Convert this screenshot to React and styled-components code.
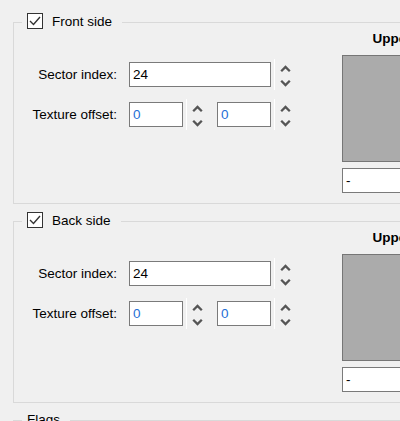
import React from "react";
import styled, { createGlobalStyle } from "styled-components";

const GlobalStyle = createGlobalStyle`
  html, body {
    margin: 0;
    padding: 0;
    overflow: hidden;
    background: #f0f0f0;
  }
`;

const Page = styled.div`
  width: 400px;
  height: 421px;
  overflow: hidden;
  box-sizing: border-box;
  padding: 22px 0 0 13px;
  background: #f0f0f0;
  font-family: "Liberation Sans", Arial, sans-serif;
  font-size: 13.5px;
  color: #000;
`;

const GroupBox = styled.div`
  position: relative;
  box-sizing: border-box;
  width: 520px;
  height: ${(p) => p.height || 182}px;
  margin-bottom: 17px;
  border: 1px solid #d9d9d9;
`;

// legend sits over the top border line, like a WinForms group box caption
const Legend = styled.div`
  position: absolute;
  top: -10px;
  left: 8px;
  height: 19px;
  display: flex;
  align-items: flex-start;
  gap: 9px;
  padding: 0 10px 0 5px;
  background: #f0f0f0;
  line-height: 17px;
  white-space: nowrap;
`;

const CheckBox = styled.div`
  box-sizing: border-box;
  width: 16px;
  height: 16px;
  border: 1px solid #333;
  background: #fff;
  display: flex;
  align-items: center;
  justify-content: center;
`;

const Body = styled.div`
  display: flex;
  padding-top: 7px;
`;

const Fields = styled.div`
  display: grid;
  grid-template-columns: 103px auto;
  column-gap: 12px;
  row-gap: 9px;
  padding-top: 29px;
  align-items: center;
  align-self: flex-start;
`;

const Label = styled.div`
  text-align: right;
  line-height: 17px;
  white-space: nowrap;
`;

const Controls = styled.div`
  display: flex;
  align-items: center;
  height: 31px;
`;

const TextBox = styled.div`
  box-sizing: border-box;
  width: ${(p) => p.width}px;
  height: 25px;
  border: 1px solid #7a7a7a;
  background: #fff;
  padding-left: 3px;
  line-height: 23px;
  color: ${(p) => (p.numeric ? "#1f6fd6" : "#000")};
  margin-right: 3px;
`;

const Spinner = styled.div`
  box-sizing: border-box;
  width: 22px;
  height: 31px;
  border-left: 1px solid #fff;
  display: flex;
  flex-direction: column;
  align-items: center;
  padding-top: 6px;
  gap: 6px;
  margin-right: ${(p) => (p.spaced ? 9 : 0)}px;
`;

const Preview = styled.div`
  margin-left: 46px;
  width: 100px;
  display: flex;
  flex-direction: column;
`;

const PreviewTitle = styled.div`
  font-weight: bold;
  text-align: center;
  line-height: 17px;
  margin-bottom: 8px;
  white-space: nowrap;
`;

const TextureBox = styled.div`
  box-sizing: border-box;
  height: 107px;
  background: #ababab;
  border: 1px solid #767676;
  margin-bottom: 6px;
`;

const NameBox = styled.div`
  box-sizing: border-box;
  height: 25px;
  border: 1px solid #7a7a7a;
  background: #fff;
  padding-left: 3px;
  line-height: 23px;
`;

const Chevron = ({ down }) => (
  <svg width="11" height="8" viewBox="0 0 11 8">
    <polyline
      points={down ? "1.2,1.8 5.5,6.1 9.8,1.8" : "1.2,6.2 5.5,1.9 9.8,6.2"}
      fill="none"
      stroke="#555"
      strokeWidth="2.3"
    />
  </svg>
);

const Spin = ({ spaced }) => (
  <Spinner spaced={spaced}>
    <Chevron />
    <Chevron down />
  </Spinner>
);

const Check = () => (
  <CheckBox>
    <svg width="14" height="14" viewBox="0 0 14 14">
      <polyline
        points="2,7 5.5,10.5 12,3"
        fill="none"
        stroke="#333"
        strokeWidth="1.4"
      />
    </svg>
  </CheckBox>
);

const SideGroup = ({ title }) => (
  <GroupBox>
    <Legend>
      <Check />
      <span>{title}</span>
    </Legend>
    <Body>
      <Fields>
        <Label>Sector index:</Label>
        <Controls>
          <TextBox width={142}>24</TextBox>
          <Spin />
        </Controls>
        <Label>Texture offset:</Label>
        <Controls>
          <TextBox width={54} numeric>0</TextBox>
          <Spin spaced />
          <TextBox width={54} numeric>0</TextBox>
          <Spin />
        </Controls>
      </Fields>
      <Preview>
        <PreviewTitle>Upper</PreviewTitle>
        <TextureBox />
        <NameBox>-</NameBox>
      </Preview>
    </Body>
  </GroupBox>
);

export default function App() {
  return (
    <Page>
      <GlobalStyle />
      <SideGroup title="Front side" />
      <SideGroup title="Back side" />
      <GroupBox height={80}>
        <Legend>
          <span>Flags</span>
        </Legend>
      </GroupBox>
    </Page>
  );
}
